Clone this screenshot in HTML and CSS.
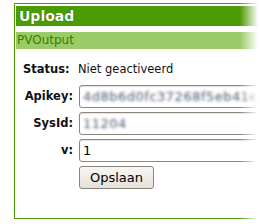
FILE: index.html
```html
<!DOCTYPE html>
<html>
<head>
<meta charset="utf-8">
<link rel="stylesheet" href="styles.css">
</head>
<body>
<div class="panel">
  <div class="head">Upload</div>
  <div class="sub">PVOutput</div>
  <div class="form">
    <div class="lbl lbl-left">Status:</div>
    <div class="val">Niet geactiveerd</div>
    <div class="lbl">Apikey:</div>
    <div class="field"><span class="blur">4d8b6d0fc37268f5eb41e</span></div>
    <div class="lbl">SysId:</div>
    <div class="field"><span class="blur">11204</span></div>
    <div class="lbl">v:</div>
    <div class="field"><span class="num">1</span></div>
    <div></div>
    <div><button class="btn">Opslaan</button></div>
  </div>
</div>
<div class="fade"></div>
</body>
</html>
```

FILE: styles.css
```css
html, body {
  margin: 0;
  padding: 0;
  background: #fff;
  overflow: hidden;
  width: 260px;
  height: 224px;
  font-family: "DejaVu Sans", sans-serif;
}
.panel {
  margin: 3px 0 0 14px;
  width: 300px;
  height: 216px;
  border: 1px solid #4a9c00;
  box-sizing: border-box;
  padding: 2px 0 0 1px;
}
.head {
  height: 20px;
  background: #4a9c00;
  color: #fff;
  font-weight: bold;
  font-size: 14px;
  line-height: 20px;
  padding-left: 3px;
  text-shadow: 0 0 1px #1c3a00;
}
.sub {
  margin-top: 6px;
  height: 17px;
  background: #99cc66;
  color: #3a7d00;
  font-size: 12px;
  line-height: 17px;
  padding-left: 1px;
}
.form {
  display: grid;
  grid-template-columns: 50px 200px;
  grid-auto-rows: 23px;
  column-gap: 6px;
  row-gap: 4px;
  margin: 9px 0 0 7px;
  font-size: 11.5px;
}
.lbl {
  font-weight: bold;
  text-align: right;
  line-height: 23px;
  color: #111;
}
.lbl-left { text-align: left; white-space: nowrap; }
.val {
  line-height: 23px;
  font-size: 11.5px;
  color: #111;
  margin-left: -1px;
}
.field {
  border: 1px solid #8e887c;
  border-radius: 3px;
  box-sizing: border-box;
  background: #fff;
  box-shadow: inset 0 1px 1px rgba(0,0,0,0.12);
  padding-left: 3px;
  font-size: 13px;
  line-height: 21px;
  overflow: hidden;
  white-space: nowrap;
}
.blur {
  color: transparent;
  text-shadow: 0 0 3px rgba(70, 85, 105, 0.95);
  letter-spacing: 0.5px;
}
.num { color: #000; }
.btn {
  width: 75px;
  height: 23px;
  border: 1px solid #8a8478;
  border-radius: 3px;
  background: linear-gradient(#f8f7f4, #e4e1da);
  font-family: "DejaVu Sans", sans-serif;
  font-size: 13px;
  color: #000;
  padding: 0;
  margin: 0;
}
.fade {
  position: absolute;
  top: 0;
  right: 0;
  width: 20px;
  height: 224px;
  background: linear-gradient(to right, rgba(255,255,255,0), #fff 90%);
}
```
